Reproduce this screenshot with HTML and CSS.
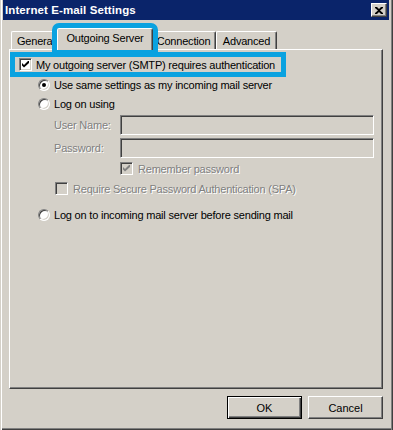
FILE: index.html
```html
<!DOCTYPE html>
<html lang="en">
<head>
  <meta charset="UTF-8">
  <title>Internet E-mail Settings</title>
  <link rel="stylesheet" href="styles.css">
</head>
<body>
  <div class="window">
    <div class="titlebar">
      <span class="title">Internet E-mail Settings</span>
      <span class="close">
        <svg width="8" height="7" viewBox="0 0 8 7"><path d="M0 0h2l2 2 2-2h2v1L5 3.5 8 6v1H6L4 5 2 7H0V6l3-2.5L0 1z" fill="#000"/></svg>
      </span>
    </div>

    <div class="content">
      <div class="tabs">
        <div class="tab tab-general">Genera</div>
        <div class="tab selected">Outgoing Server</div>
        <div class="tab tab-connection">Connection</div>
        <div class="tab tab-advanced">Advanced</div>
      </div>

      <div class="panel">
        <div class="row auth">
          <span class="check on"><svg width="7" height="7" viewBox="0 0 7 7"><path d="M0 2l2 2 5-5v3L2 6.5 0 4.5z" fill="#000"/></svg></span>
          <span>My outgoing server (SMTP) requires authentication</span>
        </div>

        <div class="row radio-row r1">
          <span class="radio on"></span>
          <span>Use same settings as my incoming mail server</span>
        </div>

        <div class="row radio-row r2">
          <span class="radio"></span>
          <span>Log on using</span>
        </div>

        <div class="field f-user">
          <span class="field-label disabled">User Name:</span>
          <span class="textbox"></span>
        </div>

        <div class="field f-pass">
          <span class="field-label disabled">Password:</span>
          <span class="textbox"></span>
        </div>

        <div class="row remember">
          <span class="check off on"><svg width="7" height="7" viewBox="0 0 7 7"><path d="M0 2l2 2 5-5v3L2 6.5 0 4.5z" fill="#808080"/></svg></span>
          <span class="disabled">Remember password</span>
        </div>

        <div class="row spa">
          <span class="check off"></span>
          <span class="disabled">Require Secure Password Authentication (SPA)</span>
        </div>

        <div class="row radio-row r3">
          <span class="radio"></span>
          <span>Log on to incoming mail server before sending mail</span>
        </div>
      </div>

      <div class="buttons">
        <button class="btn default">OK</button>
        <button class="btn">Cancel</button>
      </div>
    </div>
  </div>
</body>
</html>
```

FILE: styles.css
```css
body {
  margin: 0;
  background: #d4d0c8;
}

.window {
  width: 393px;
  height: 430px;
  background: #d4d0c8;
  font-family: "Liberation Sans", Tahoma, sans-serif;
  font-size: 11px;
  letter-spacing: -0.2px;
  color: #000;
  box-shadow: inset 1px 0 0 #d4d0c8, inset 2px 0 0 #fff,
              inset -1px 0 0 #404040, inset -2px 0 0 #808080,
              inset 0 -1px 0 #404040, inset 0 -2px 0 #808080;
  overflow: hidden;
}

.titlebar {
  height: 20px;
  margin: 0 4px 0 3px;
  padding: 0 2px;
  background: #0a246a;
  color: #fff;
  display: flex;
  align-items: center;
  justify-content: space-between;
}

.title {
  font-weight: bold;
  font-size: 11.5px;
  letter-spacing: 0.1px;
}

.close {
  width: 16px;
  height: 14px;
  box-sizing: border-box;
  background: #d4d0c8;
  border: 1px solid;
  border-color: #fff #404040 #404040 #fff;
  box-shadow: inset -1px -1px 0 #808080;
  display: flex;
  align-items: center;
  justify-content: center;
}

.content {
  padding: 8px 10px 0 9px;
}

/* tabs */
.tabs {
  display: flex;
  align-items: flex-end;
  height: 21px;
  margin-left: 2px;
}

.tab {
  height: 18px;
  box-sizing: border-box;
  border: 1px solid;
  border-color: #fff #404040 transparent #fff;
  border-bottom: none;
  border-radius: 2px 2px 0 0;
  box-shadow: inset -1px 0 0 #808080;
  line-height: 18px;
  text-align: center;
  white-space: nowrap;
  overflow: hidden;
}

.tab-general {
  width: 48px;
  text-align: left;
  padding-left: 5px;
}

.tab-connection {
  width: 65px;
}

.tab-advanced {
  width: 61px;
}

.selected {
  width: 96px;
  height: 22px;
  margin: 0 -2px -1px;
  line-height: 18px;
  position: relative;
  z-index: 1;
  background: #d4d0c8;
  outline: 5px solid #0aa2e0;
}

/* panel */
.panel {
  height: 340px;
  box-sizing: border-box;
  border: 1px solid;
  border-color: #fff #404040 #404040 #fff;
  box-shadow: inset -1px -1px 0 #808080;
  padding-top: 7px;
}

.row {
  display: flex;
  align-items: center;
  height: 13px;
  white-space: nowrap;
}

.auth {
  width: 266px;
  height: 15px;
  margin-left: 5px;
  padding-left: 4px;
  gap: 4px;
  box-sizing: border-box;
  outline: 5px solid #0aa2e0;
}

.radio-row {
  padding-left: 28px;
  gap: 4px;
}

.r1 { margin-top: 6px; }
.r2 { margin-top: 6px; }
.r3 { margin-top: 13px; }

.remember {
  margin-top: 4px;
  padding-left: 110px;
  gap: 5px;
}

.spa {
  margin-top: 7px;
  padding-left: 45px;
  gap: 5px;
}

.field {
  display: flex;
  align-items: center;
  height: 20px;
  padding-left: 44px;
  padding-right: 8px;
}

.f-user { margin-top: 5px; }
.f-pass { margin-top: 3px; }

.field-label {
  width: 66px;
}

.textbox {
  flex: 1;
  height: 20px;
  box-sizing: border-box;
  border: 1px solid;
  border-color: #808080 #fff #fff #808080;
  box-shadow: inset 1px 1px 0 #404040, inset -1px -1px 0 #d4d0c8;
  background: #d4d0c8;
}

.disabled {
  color: #808080;
  text-shadow: 1px 1px 0 #fff;
}

/* checkbox and radio */
.check {
  width: 13px;
  height: 13px;
  flex: none;
  box-sizing: border-box;
  border: 1px solid;
  border-color: #808080 #fff #fff #808080;
  box-shadow: inset 1px 1px 0 #404040, inset -1px -1px 0 #d4d0c8;
  background: #fff;
  display: flex;
  align-items: center;
  justify-content: center;
}

.check.off {
  background: #d4d0c8;
}

.radio {
  width: 12px;
  height: 12px;
  flex: none;
  box-sizing: border-box;
  border-radius: 50%;
  border: 1px solid;
  border-color: #808080 #fff #fff #808080;
  box-shadow: inset 1px 1px 0 #404040, inset -1px -1px 0 #d4d0c8;
  background: #fff;
  position: relative;
}

.radio.on::after {
  content: "";
  position: absolute;
  left: 3px;
  top: 3px;
  width: 4px;
  height: 4px;
  border-radius: 50%;
  background: #000;
}

/* buttons */
.buttons {
  display: flex;
  justify-content: flex-end;
  gap: 6px;
  margin-top: 7px;
}

.btn {
  width: 75px;
  height: 23px;
  box-sizing: border-box;
  font-family: "Liberation Sans", Tahoma, sans-serif;
  font-size: 11px;
  color: #000;
  background: #d4d0c8;
  border: 1px solid;
  border-color: #fff #404040 #404040 #fff;
  box-shadow: inset -1px -1px 0 #808080;
  padding: 0;
}

.btn.default {
  border: 1px solid #000;
  box-shadow: inset 1px 1px 0 #fff, inset -1px -1px 0 #404040, inset -2px -2px 0 #808080;
}
```
